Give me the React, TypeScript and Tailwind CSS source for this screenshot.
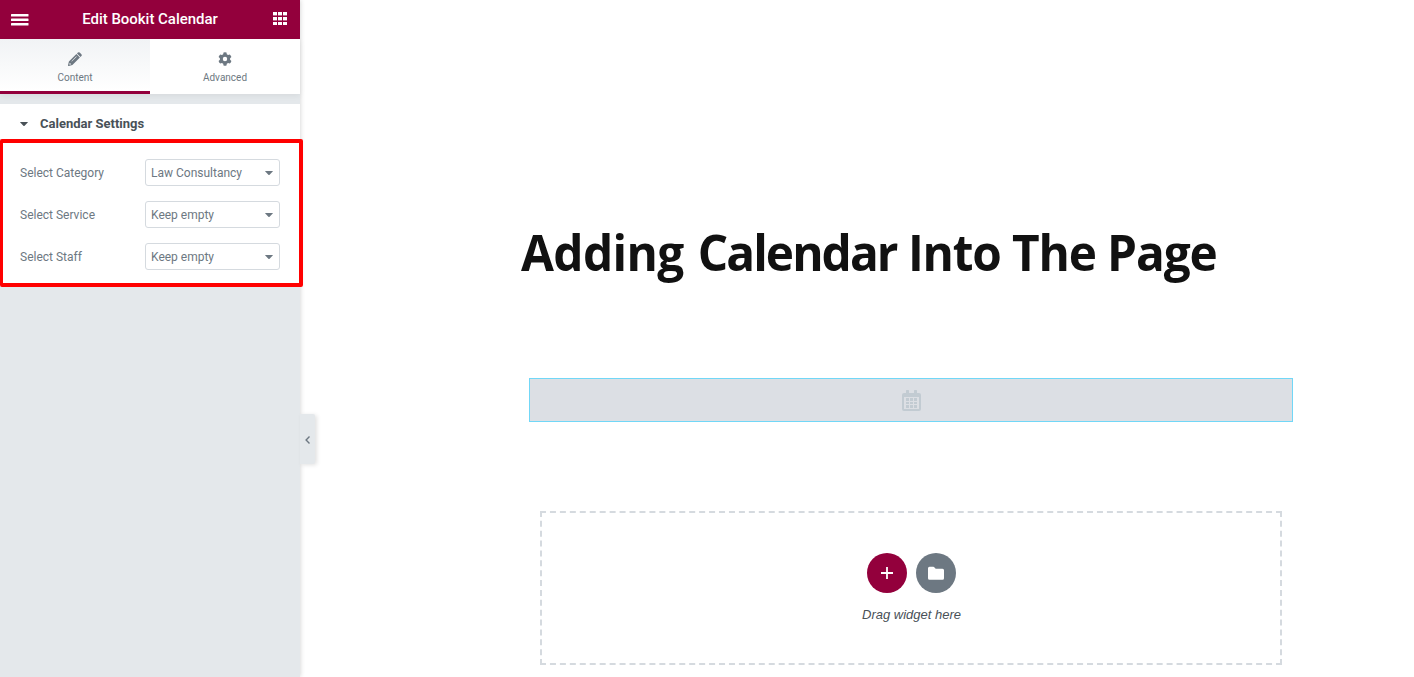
import React from "react";

const fields = [
  { label: "Select Category", value: "Law Consultancy" },
  { label: "Select Service", value: "Keep empty" },
  { label: "Select Staff", value: "Keep empty" },
];

function Caret({ className }: { className: string }) {
  return (
    <svg className={className} width="8" height="4" viewBox="0 0 8 4" fill="currentColor">
      <path d="M.5 0h7q.8 0 .2.6L4.6 3.7q-.6.6-1.2 0L.3.6Q-.3 0 .5 0z" />
    </svg>
  );
}

function PanelHeader() {
  return (
    <header className="flex h-[39px] items-center justify-between bg-[#93003c] pr-[13px] pl-[11px] text-white">
      <svg width="18" height="12" viewBox="0 0 18 12" fill="currentColor">
        <rect x="0" y="0" width="17.5" height="2.4" rx=".5" />
        <rect x="0" y="4.5" width="17.5" height="2.4" rx=".5" />
        <rect x="0" y="9" width="17.5" height="2.4" rx=".5" />
      </svg>
      <h1 className="-ml-[2px] text-[15px] leading-[39px] font-medium tracking-[-0.03px]">Edit Bookit Calendar</h1>
      <svg width="14" height="13" viewBox="0 0 14 13" fill="currentColor" className="-mt-[2px]">
        {[0, 5, 10].map((x) =>
          [0, 5, 10].map((y) => <rect key={`${x}-${y}`} x={x} y={y} width="4" height="3.4" />)
        )}
      </svg>
    </header>
  );
}

function Tabs() {
  return (
    <nav className="relative flex h-[55px] bg-white text-[10px] leading-[12px] text-[#6d7882] shadow-[0_2px_6px_rgba(0,0,0,0.06)]">
      <div className="flex w-[150px] flex-col items-center border-b-3 border-[#93003c] bg-linear-to-b from-[#f1f3f5] to-white pt-[13px]">
        <svg width="14" height="14" viewBox="0 0 14 14" fill="currentColor">
          <path
            fillRule="evenodd"
            d="M9.9.6Q10.8-.2 11.7.6L13.4 2.3Q14.2 3.2 13.4 4.1L12.5 5 9 1.5zM8.4 2.1l3.5 3.5-7.5 7.5L.8 14Q-.1 14.1 0 13.2L.9 9.6zM8.3 4.3 3.4 9.2l.4.4 4.9-4.9zM1.7 10.9 1.3 12.2l.5.5 1.3-.4v-.6h-.8v-.8z"
          />
        </svg>
        <span className="mt-[6px]">Content</span>
      </div>
      <div className="flex w-[150px] flex-col items-center pt-[13px]">
        <svg width="14" height="14" viewBox="0 0 14 14" fill="currentColor">
          <path
            fillRule="evenodd"
            d="M5.5.5Q7 .1 8.500.5l.3 1.700 1.300.8 1.700-.6q1.200 1.200 1.600 2.700l-1.300 1.200v1.400l1.300 1.200q-.4 1.500-1.600 2.700l-1.700-.6-1.300.8-.3 1.700q-1.500.4-3 0l-.3-1.700-1.300-.8-1.700.6Q1 10.400.6 8.900l1.300-1.200V6.300L.6 5.100Q1 3.600 2.200 2.400l1.700.6 1.300-.8zM7 4.800a2.200 2.200 0 1 0 0 4.400 2.200 2.200 0 0 0 0-4.400z"
          />
        </svg>
        <span className="mt-[6px]">Advanced</span>
      </div>
    </nav>
  );
}

function SidePanel() {
  return (
    <aside className="relative z-10 h-[677px] w-[300px] shrink-0 bg-[#e4e8eb] font-[Roboto,sans-serif] shadow-[0_0_5px_rgba(0,0,0,0.2)]">
      <PanelHeader />
      <Tabs />
      <section className="mt-[10px]">
        <div className="flex h-[35px] items-center bg-white pt-[4px] pl-[20px] text-[#495157]">
          <Caret className="mt-px" />
          <h2 className="ml-[12px] text-[13px] leading-[16px] font-bold">Calendar Settings</h2>
        </div>
        <div className="h-[148px] w-[303px] rounded-[2px] border-4 border-l-3 border-[#ff0000] bg-white pt-[16px] pl-[17px]">
          {fields.map((f) => (
            <div key={f.label} className="mb-[15px] flex h-[27px] items-center text-[12px] text-[#6d7882]">
              <span className="w-[125px]">{f.label}</span>
              <div className="flex h-[27px] w-[135px] items-center justify-between rounded-[3px] border border-[#d5dadf] pr-[6px] pl-[5px]">
                <span>{f.value}</span>
                <Caret className="mt-px" />
              </div>
            </div>
          ))}
        </div>
      </section>
      <button className="absolute top-[414px] left-[300px] flex h-[50px] w-[15px] items-center justify-center rounded-r-[2px] bg-[#e4e8eb] text-[#6d7882] shadow-[2px_1px_4px_rgba(0,0,0,0.12)]">
        <svg width="5" height="8" viewBox="0 0 5 8" fill="none" stroke="currentColor" strokeWidth="1.4" className="mt-[2px]">
          <path d="M4.5.6 1.1 4l3.4 3.4" />
        </svg>
      </button>
    </aside>
  );
}

function Canvas() {
  return (
    <main className="flex h-[677px] flex-1 flex-col bg-white pl-[221px]">
      <h2 className="mt-[217px] h-[71px] w-[728px] origin-left scale-x-[0.955] font-['Open_Sans',sans-serif] text-[50px] leading-[70px] font-bold tracking-[-1.2px] whitespace-nowrap text-[#111111]">
        <span className="mr-[3px] tracking-[-0.65px]">Adding</span>{" "}
        <span className="tracking-[-2px]">Calendar</span> Into The Page
      </h2>
      <div className="mt-[90px] ml-[8px] flex h-[44px] w-[764px] items-center justify-center border border-[#71d7f7] bg-[#dcdfe4] pt-px text-[#c2cbd2]">
        <svg width="19" height="21" viewBox="0 0 19 21" fill="currentColor">
          <path
            fillRule="evenodd"
            d="M4 .6q0-.6.6-.6h1.8q.6 0 .6.6V3h5V.6q0-.6.6-.6h1.8q.6 0 .6.6V3h2q2 0 2 2v14q0 2-2 2H2q-2 0-2-2V5q0-2 2-2h2zM2 7v12h15V7z"
          />
          {[4, 8, 12].map((x) =>
            [8, 12, 15].map((y) => <rect key={`${x}-${y}`} x={x} y={y} width="3" height={y === 12 ? 2 : 3} />)
          )}
        </svg>
      </div>
      <div className="mt-[89px] ml-[19px] flex h-[154px] w-[742px] flex-col items-center border-2 border-dashed border-[#d5dadf] pt-[40px]">
        <div className="flex gap-[9px] pl-px">
          <button className="flex size-10 items-center justify-center rounded-full bg-[#93003c] text-white">
            <svg width="12" height="12" viewBox="0 0 12 12" fill="currentColor">
              <path d="M5.1 0h1.8v5.1H12v1.8H6.9V12H5.1V6.9H0V5.1h5.1z" />
            </svg>
          </button>
          <button className="flex size-10 items-center justify-center rounded-full bg-[#6d7882] text-white">
            <svg width="16" height="14" viewBox="0 0 16 14" fill="currentColor">
              <path d="M1.5.8h3.8q.7 0 1.2.6l1.200 1.400h6.800q1.500 0 1.500 1.500v8q0 1.500-1.500 1.500h-13Q0 13.800 0 12.300V2.300Q0 .8 1.500.8z" />
            </svg>
          </button>
        </div>
        <p className="mt-[14px] pl-px font-['Liberation_Sans',sans-serif] text-[13px] leading-[16px] text-[#495157] italic">
          Drag widget here
        </p>
      </div>
    </main>
  );
}

export default function App() {
  return (
    <div className="flex h-[677px] w-[1414px] overflow-hidden bg-white">
      <SidePanel />
      <Canvas />
    </div>
  );
}
